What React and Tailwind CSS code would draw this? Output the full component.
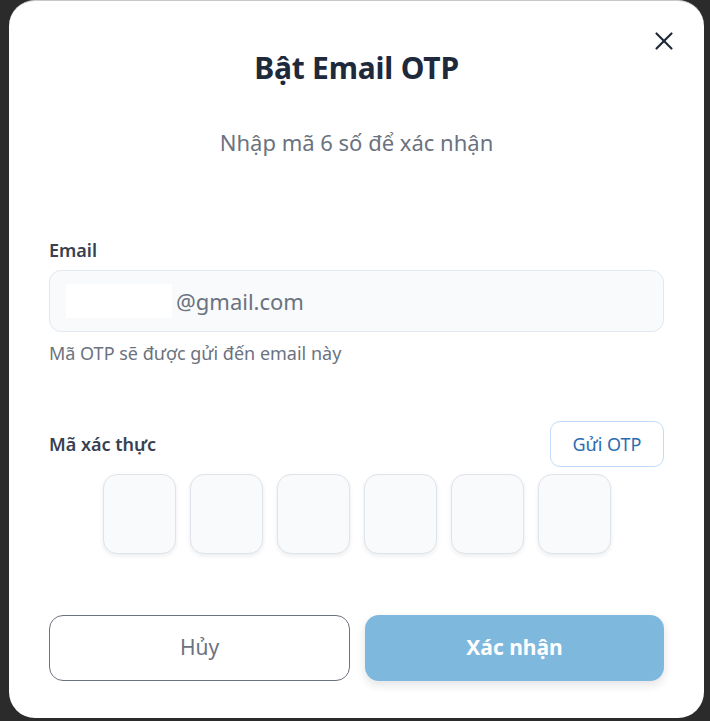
import { X } from 'lucide-react';

const font = { fontFamily: '"Noto Sans", "Open Sans", sans-serif' };

const App = () => {
    const boxes = [0, 1, 2, 3, 4, 5];

    return (
        <div className="w-[710px] h-[721px] bg-[#2b2b2b] pl-[9px] pr-[6px] overflow-hidden" style={font}>
            <div className="relative h-[718px] bg-white rounded-[26px] border-t border-[#c9c9c9] px-[40px]">
                <button className="absolute right-[25px] top-[25px] text-[#1f2937]">
                    <X size={30} strokeWidth={1.7} />
                </button>

                <h2 className="pt-[43px] text-center text-[30px] leading-[48px] font-bold tracking-[-0.2px] text-[#1e293b]">Bật Email OTP</h2>
                <p className="mt-[30px] text-center text-[22px] leading-[40px] text-[#6b7280]">Nhập mã 6 số để xác nhận</p>

                <div className="mt-[78px]">
                    <label className="block text-[18px] leading-[20px] font-semibold text-[#374151]">Email</label>
                    <div className="mt-[10px] h-[62px] rounded-[12px] border border-[#e2e8f0] bg-[#f8fafc] flex items-center pl-[16px] text-[22px] text-[#6b7280]">
                        <span className="inline-block w-[106px] h-[34px] bg-white mr-[4px]"></span>
                        <span>@gmail.com</span>
                    </div>
                    <p className="mt-[9px] text-[18px] leading-[24px] text-[#6b7280]">Mã OTP sẽ được gửi đến email này</p>
                </div>

                <div className="mt-[56px] flex items-center justify-between">
                    <label className="text-[18px] font-semibold text-[#374151]">Mã xác thực</label>
                    <button className="h-[46px] w-[114px] rounded-[10px] border border-[#bfdbfe] bg-white text-[18px] text-[#2b6cb0]">Gửi OTP</button>
                </div>

                <div className="mt-[7px] flex justify-center gap-[14px]">
                    {boxes.map(i => (
                        <input key={i} maxLength={1} className="w-[73px] h-[80px] rounded-[14px] border border-[#dfe3ea] bg-[#f8fafc] shadow-[0_2px_4px_rgba(15,23,42,0.08)] text-center text-[24px] focus:outline-none" />
                    ))}
                </div>

                <div className="mt-[61px] flex gap-[15px]">
                    <button className="flex-1 h-[66px] rounded-[14px] border border-[#6b7280] bg-white text-[21px] text-[#6b7280]">Hủy</button>
                    <button className="flex-1 h-[66px] rounded-[14px] bg-[#7fb8dd] text-[21px] font-bold text-white shadow-[0_4px_10px_rgba(15,23,42,0.12)]">Xác nhận</button>
                </div>
            </div>
        </div>
    );
};

export default App;
